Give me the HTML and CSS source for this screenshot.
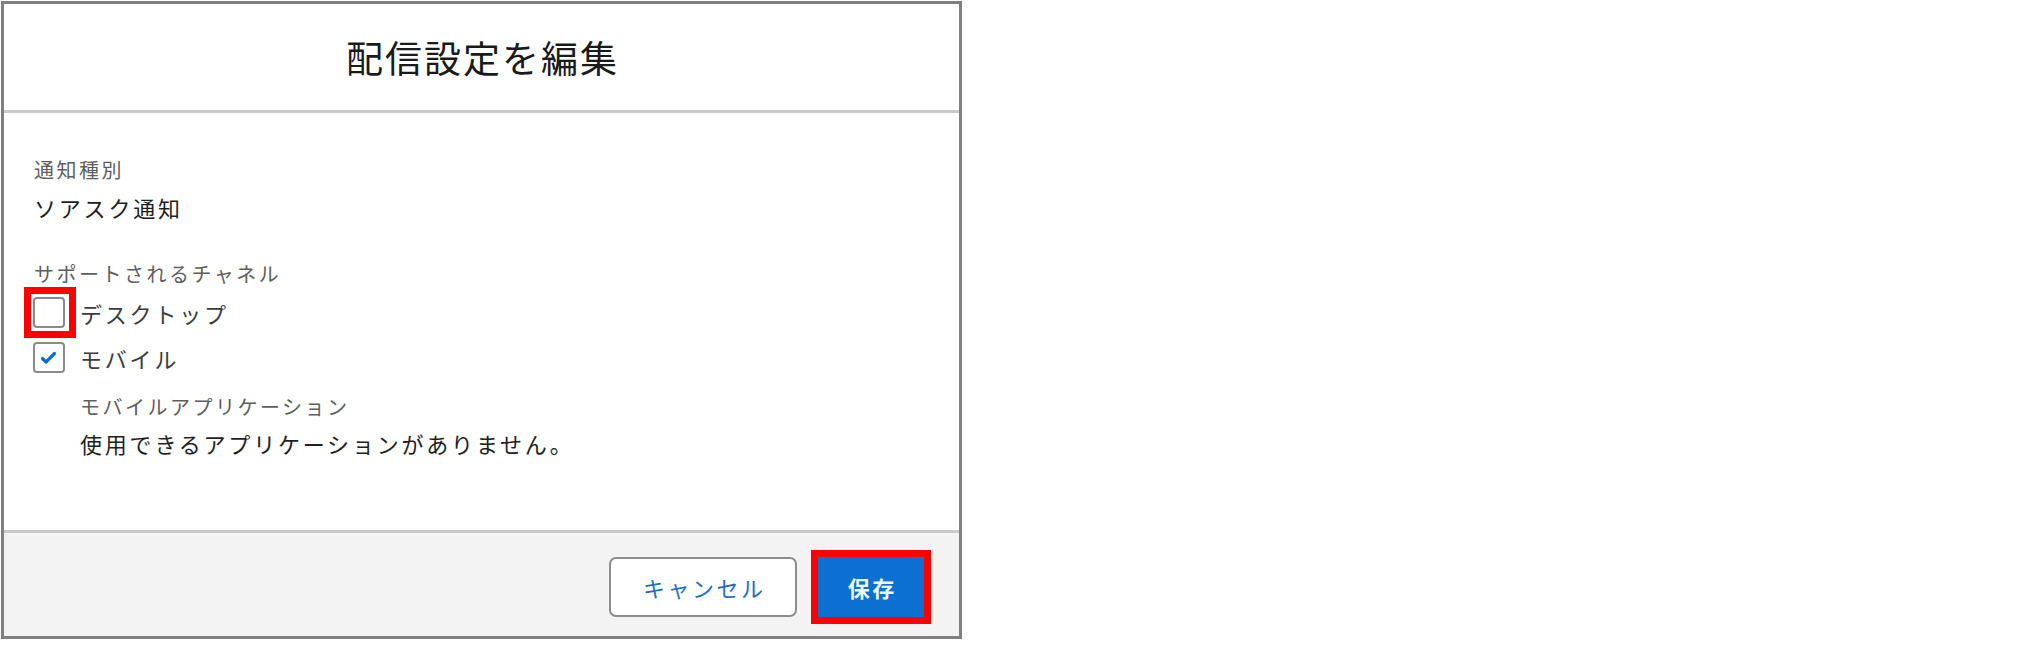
FILE: index.html
```html
<!DOCTYPE html>
<html lang="ja">
<head>
<meta charset="utf-8">
<title>配信設定を編集</title>
<link rel="stylesheet" href="styles.css">
</head>
<body>
<div class="modal">
  <header class="modal-header">
    <h2 class="modal-title">配信設定を編集</h2>
  </header>
  <div class="modal-body">
    <div class="field">
      <div class="label">通知種別</div>
      <div class="value">ソアスク通知</div>
    </div>
    <div class="field channels">
      <div class="label">サポートされるチャネル</div>
      <div class="check-row">
        <span class="checkbox highlight"></span>
        <span class="check-text">デスクトップ</span>
      </div>
      <div class="check-row">
        <span class="checkbox checked">
          <svg viewBox="0 0 28 27" width="28" height="27" aria-hidden="true">
            <path d="M7.5 14.5 L11 18 L19.5 9.5" fill="none" stroke="#0b6fd1" stroke-width="3.2" stroke-linecap="round" stroke-linejoin="round"/>
          </svg>
        </span>
        <span class="check-text">モバイル</span>
      </div>
      <div class="sub">
        <div class="label">モバイルアプリケーション</div>
        <div class="value">使用できるアプリケーションがありません。</div>
      </div>
    </div>
  </div>
  <footer class="modal-footer">
    <button class="btn btn-neutral">キャンセル</button>
    <button class="btn btn-brand highlight">保存</button>
  </footer>
</div>
</body>
</html>
```

FILE: styles.css
```css
* {
  box-sizing: border-box;
}

html, body {
  margin: 0;
  padding: 0;
  background: #ffffff;
}

body {
  font-family: "Noto Sans CJK JP", "Noto Sans", sans-serif;
  color: #1e1e1e;
}

.modal {
  margin: 1px 0 0 1px;
  width: 961px;
  height: 638px;
  border: 3px solid #808080;
  display: flex;
  flex-direction: column;
  background: #ffffff;
}

.modal-header {
  height: 109px;
  flex: none;
  border-bottom: 3px solid #cacaca;
  display: flex;
  align-items: center;
  justify-content: center;
}

.modal-title {
  margin: 0;
  font-size: 37px;
  font-weight: 400;
  letter-spacing: 2px;
  padding-left: 2px;
  line-height: 50px;
  color: #1a1a1a;
}

.modal-body {
  flex: 1;
  padding: 43px 30px 0 30px;
}

.label {
  font-size: 20px;
  line-height: 28px;
  letter-spacing: 2.5px;
  color: #5e5e5e;
}

.value {
  margin-top: 7px;
  font-size: 22px;
  line-height: 32px;
  letter-spacing: 2.8px;
  color: #1e1e1e;
}

.channels {
  margin-top: 37px;
}

.check-row {
  display: flex;
  align-items: center;
  height: 45px;
}

.channels .label + .check-row {
  margin-top: 2px;
}

.checkbox {
  position: relative;
  flex: none;
  width: 32px;
  height: 31px;
  margin-left: -1px;
  border: 2px solid #8b8b8b;
  border-radius: 4px;
  background: #ffffff;
  display: flex;
  align-items: center;
  justify-content: center;
}

.checkbox svg {
  display: block;
}

.checkbox.highlight::after {
  content: "";
  position: absolute;
  top: -12px;
  bottom: -12px;
  left: -11px;
  right: -13px;
  border: 7px solid #ff0000;
}

.check-text {
  margin-left: 15px;
  font-size: 22px;
  line-height: 32px;
  letter-spacing: 2.8px;
  color: #3c3c3c;
}

.sub {
  margin-top: 13px;
  padding-left: 46px;
}

.sub .value {
  margin-top: 6px;
}

.modal-footer {
  height: 106px;
  flex: none;
  border-top: 3px solid #cacaca;
  background: #f3f3f3;
  display: flex;
  justify-content: flex-end;
  align-items: flex-start;
  padding: 24px 35px 0 0;
}

.btn {
  position: relative;
  font-family: "Noto Sans CJK JP", "Noto Sans", sans-serif;
  font-size: 22px;
  height: 60px;
  letter-spacing: 2.5px;
  padding: 0 0 0 2.5px;
  cursor: pointer;
}

.btn-neutral {
  width: 188px;
  background: #ffffff;
  border: 2px solid #8c8c8c;
  border-radius: 7px;
  color: #1b6fc5;
}

.btn-brand {
  width: 106px;
  margin-left: 21px;
  background: #0b70d1;
  border: none;
  border-radius: 0;
  color: #eef6ff;
  font-weight: 700;
}

.btn-brand.highlight::after {
  content: "";
  position: absolute;
  top: -7px;
  bottom: -7px;
  left: -7px;
  right: -7px;
  border: 7px solid #ff0000;
}
```
